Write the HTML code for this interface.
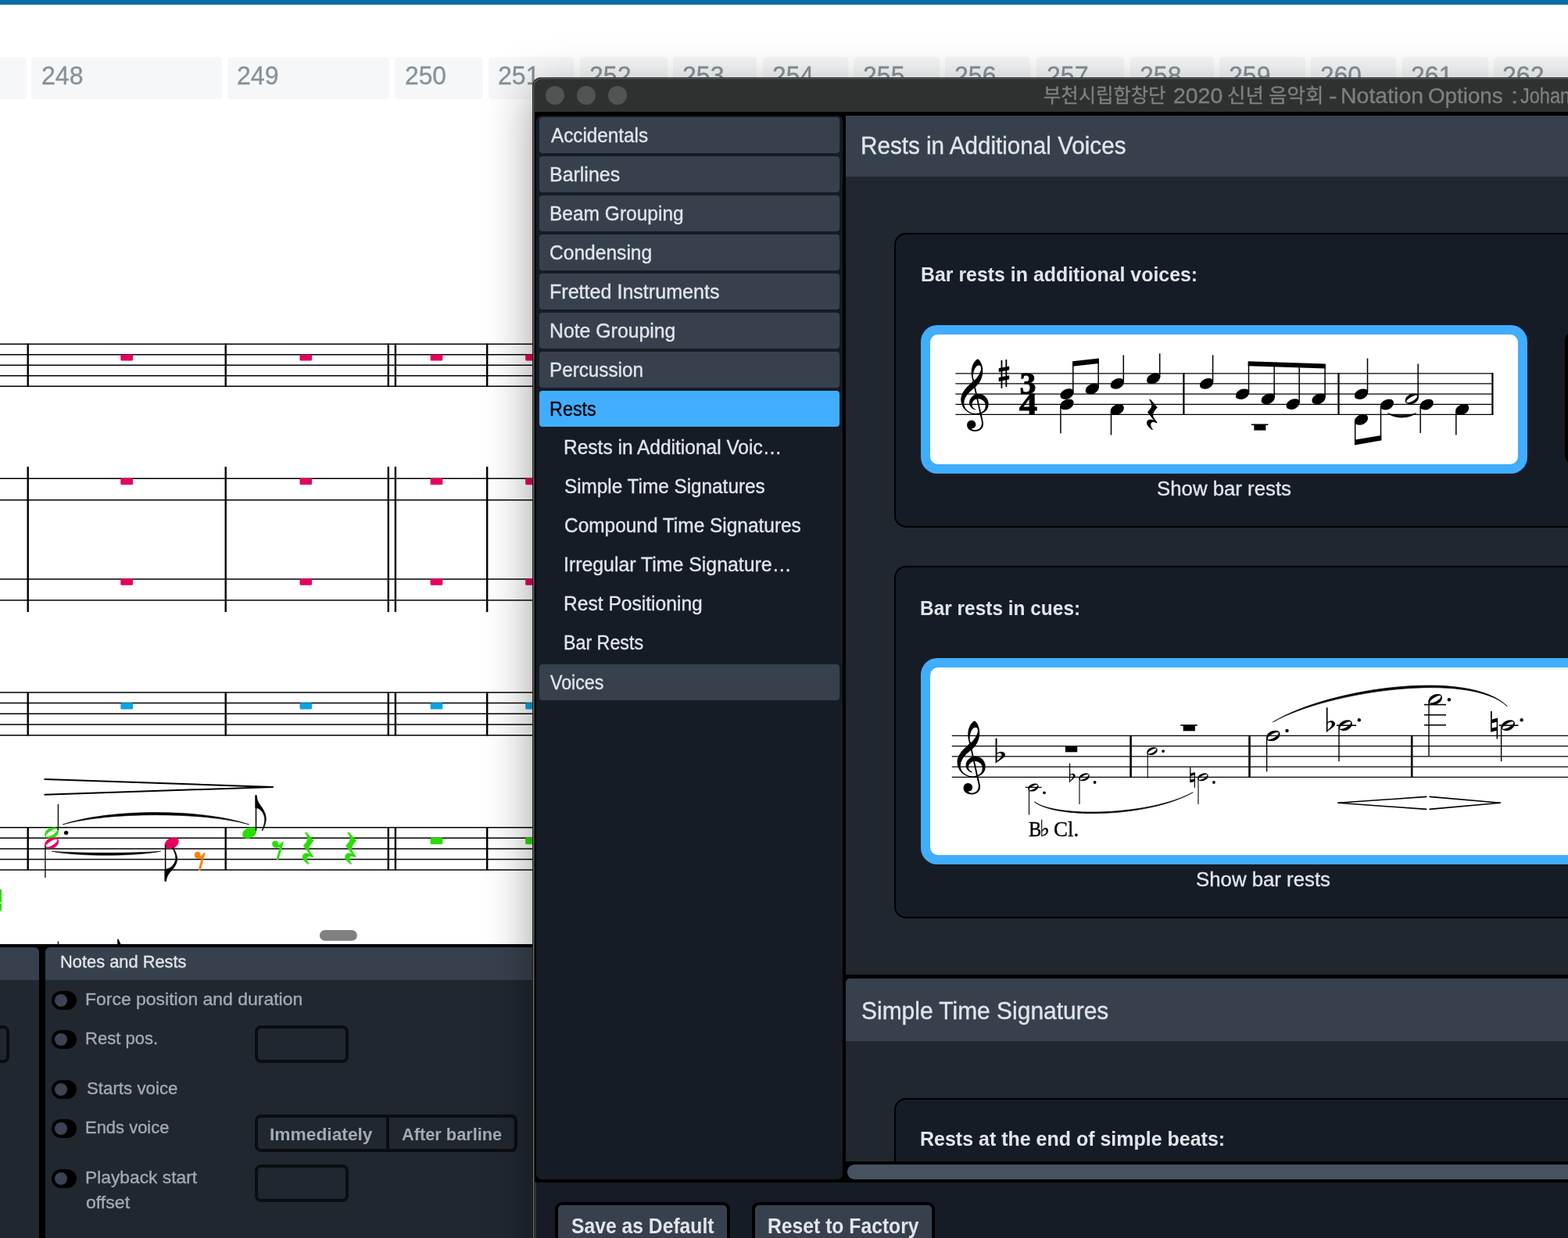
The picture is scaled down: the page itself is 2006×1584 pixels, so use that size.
<!DOCTYPE html>
<html lang="ko"><head><meta charset="utf-8"><title>Notation Options</title>
<style>
html,body{margin:0;padding:0}
body{width:2006px;height:1584px;overflow:hidden;position:relative;background:#fff;font-family:'Liberation Sans','Noto Sans CJK KR',sans-serif}
#root{position:absolute;left:0;top:0;width:2006px;height:1584px;overflow:hidden;will-change:transform}
.a{position:absolute;box-sizing:border-box}
.t{position:absolute;white-space:nowrap;line-height:1;transform-origin:0 0;display:block;-webkit-text-stroke:0.35px currentColor}
.item{position:absolute;left:690px;width:384px;height:46px;border-radius:4px;background:#37414e}
.tog{position:absolute;width:32px;height:24px;border-radius:12px;background:#000}
.tog i{position:absolute;left:4px;top:4px;width:16px;height:16px;border-radius:8px;background:#3a4453}
.inp{position:absolute;box-sizing:border-box;border:4px solid #0b0d10;border-radius:8px;background:#20272f}
.grp{position:absolute;box-sizing:border-box;border:2px solid #000;border-radius:15px;background:#161c25}
.btn{position:absolute;box-sizing:border-box;border:4px solid #000;border-radius:9px;background:#37414e}
</style></head>
<body>
<div id="root">
<div class="a" style="left:0px;top:0px;width:2006.00px;height:6.00px;background:#066da7;"></div>
<div class="a" style="left:-80px;top:73.3px;width:114.00px;height:53.70px;background:#f5f7f9;border-radius:4.5px;"></div>
<div class="a" style="left:40.4px;top:73.3px;width:243.40px;height:53.70px;background:#f5f7f9;border-radius:4.5px;"></div>
<span class="t " style="left:53.09px;top:79.78px;font-size:33.14px;color:#87939a;transform:scaleX(0.9696);">248</span>
<div class="a" style="left:290.6px;top:73.3px;width:207.50px;height:53.70px;background:#f5f7f9;border-radius:4.5px;"></div>
<span class="t " style="left:303.29px;top:79.78px;font-size:33.14px;color:#87939a;transform:scaleX(0.9696);">249</span>
<div class="a" style="left:504.9px;top:73.3px;width:113.20px;height:53.70px;background:#f5f7f9;border-radius:4.5px;"></div>
<span class="t " style="left:517.51px;top:79.78px;font-size:33.14px;color:#87939a;transform:scaleX(0.9601);">250</span>
<div class="a" style="left:624.9px;top:73.3px;width:109.60px;height:53.70px;background:#f5f7f9;border-radius:4.5px;"></div>
<span class="t " style="left:637.49px;top:79.78px;font-size:33.14px;color:#87939a;transform:scaleX(0.9696);">251</span>
<div class="a" style="left:742px;top:73.3px;width:112.00px;height:53.70px;background:#f5f7f9;border-radius:4.5px;"></div>
<span class="t " style="left:754.49px;top:79.78px;font-size:33.14px;color:#87939a;transform:scaleX(0.9696);">252</span>
<div class="a" style="left:861px;top:73.3px;width:107.00px;height:53.70px;background:#f5f7f9;border-radius:4.5px;"></div>
<span class="t " style="left:873.49px;top:79.78px;font-size:33.14px;color:#87939a;transform:scaleX(0.9696);">253</span>
<div class="a" style="left:975.7px;top:73.3px;width:109.20px;height:53.70px;background:#f5f7f9;border-radius:4.5px;"></div>
<span class="t " style="left:988.01px;top:79.78px;font-size:33.14px;color:#87939a;transform:scaleX(0.9601);">254</span>
<div class="a" style="left:1092px;top:73.3px;width:109.60px;height:53.70px;background:#f5f7f9;border-radius:4.5px;"></div>
<span class="t " style="left:1104.49px;top:79.78px;font-size:33.14px;color:#87939a;transform:scaleX(0.9696);">255</span>
<div class="a" style="left:1209px;top:73.3px;width:109.30px;height:53.70px;background:#f5f7f9;border-radius:4.5px;"></div>
<span class="t " style="left:1221.49px;top:79.78px;font-size:33.14px;color:#87939a;transform:scaleX(0.9696);">256</span>
<div class="a" style="left:1326.4px;top:73.3px;width:111.90px;height:53.70px;background:#f5f7f9;border-radius:4.5px;"></div>
<span class="t " style="left:1338.99px;top:79.78px;font-size:33.14px;color:#87939a;transform:scaleX(0.9696);">257</span>
<div class="a" style="left:1446px;top:73.3px;width:106.70px;height:53.70px;background:#f5f7f9;border-radius:4.5px;"></div>
<span class="t " style="left:1457.59px;top:79.78px;font-size:33.14px;color:#87939a;transform:scaleX(0.9696);">258</span>
<div class="a" style="left:1559.8px;top:73.3px;width:109.80px;height:53.70px;background:#f5f7f9;border-radius:4.5px;"></div>
<span class="t " style="left:1572.29px;top:79.78px;font-size:33.14px;color:#87939a;transform:scaleX(0.9696);">259</span>
<div class="a" style="left:1676.6px;top:73.3px;width:109.80px;height:53.70px;background:#f5f7f9;border-radius:4.5px;"></div>
<span class="t " style="left:1689.21px;top:79.78px;font-size:33.14px;color:#87939a;transform:scaleX(0.9601);">260</span>
<div class="a" style="left:1793.5px;top:73.3px;width:110.20px;height:53.70px;background:#f5f7f9;border-radius:4.5px;"></div>
<span class="t " style="left:1805.39px;top:79.78px;font-size:33.14px;color:#87939a;transform:scaleX(0.9696);">261</span>
<div class="a" style="left:1910.7px;top:73.3px;width:119.30px;height:53.70px;background:#f5f7f9;border-radius:4.5px;"></div>
<span class="t " style="left:1922.19px;top:79.78px;font-size:33.14px;color:#87939a;transform:scaleX(0.9696);">262</span>
<svg class="a" style="left:0;top:0" width="700" height="1208" viewBox="0 0 700 1208"><line x1="0.00" y1="440.20" x2="700.00" y2="440.20" stroke="#000" stroke-width="1.5" stroke-linecap="butt"/><line x1="0.00" y1="453.73" x2="700.00" y2="453.73" stroke="#000" stroke-width="1.5" stroke-linecap="butt"/><line x1="0.00" y1="467.25" x2="700.00" y2="467.25" stroke="#000" stroke-width="1.5" stroke-linecap="butt"/><line x1="0.00" y1="480.77" x2="700.00" y2="480.77" stroke="#000" stroke-width="1.5" stroke-linecap="butt"/><line x1="0.00" y1="494.30" x2="700.00" y2="494.30" stroke="#000" stroke-width="1.5" stroke-linecap="butt"/><line x1="35.70" y1="439.60" x2="35.70" y2="494.90" stroke="#000" stroke-width="2.4" stroke-linecap="butt"/><line x1="288.70" y1="439.60" x2="288.70" y2="494.90" stroke="#000" stroke-width="2.4" stroke-linecap="butt"/><line x1="496.80" y1="439.60" x2="496.80" y2="494.90" stroke="#000" stroke-width="2.4" stroke-linecap="butt"/><line x1="505.90" y1="439.60" x2="505.90" y2="494.90" stroke="#000" stroke-width="2.4" stroke-linecap="butt"/><line x1="623.20" y1="439.60" x2="623.20" y2="494.90" stroke="#000" stroke-width="2.4" stroke-linecap="butt"/><rect x="154.30" y="453.43" width="15.70" height="8.10" rx="1.5" fill="#e6005f"/><rect x="383.50" y="453.43" width="15.50" height="8.10" rx="1.5" fill="#e6005f"/><rect x="550.60" y="453.43" width="15.70" height="8.10" rx="1.5" fill="#e6005f"/><rect x="672.20" y="453.43" width="15.80" height="8.10" rx="1.5" fill="#e6005f"/><line x1="0.00" y1="612.20" x2="700.00" y2="612.20" stroke="#000" stroke-width="1.5" stroke-linecap="butt"/><line x1="0.00" y1="639.70" x2="700.00" y2="639.70" stroke="#000" stroke-width="1.5" stroke-linecap="butt"/><line x1="0.00" y1="741.00" x2="700.00" y2="741.00" stroke="#000" stroke-width="1.5" stroke-linecap="butt"/><line x1="0.00" y1="768.10" x2="700.00" y2="768.10" stroke="#000" stroke-width="1.5" stroke-linecap="butt"/><line x1="35.70" y1="597.20" x2="35.70" y2="783.10" stroke="#000" stroke-width="2.4" stroke-linecap="butt"/><line x1="288.70" y1="597.20" x2="288.70" y2="783.10" stroke="#000" stroke-width="2.4" stroke-linecap="butt"/><line x1="496.80" y1="597.20" x2="496.80" y2="783.10" stroke="#000" stroke-width="2.4" stroke-linecap="butt"/><line x1="505.90" y1="597.20" x2="505.90" y2="783.10" stroke="#000" stroke-width="2.4" stroke-linecap="butt"/><line x1="623.20" y1="597.20" x2="623.20" y2="783.10" stroke="#000" stroke-width="2.4" stroke-linecap="butt"/><rect x="154.30" y="611.90" width="15.70" height="8.40" rx="1.5" fill="#e6005f"/><rect x="154.30" y="740.30" width="15.70" height="8.40" rx="1.5" fill="#e6005f"/><rect x="383.50" y="611.90" width="15.50" height="8.40" rx="1.5" fill="#e6005f"/><rect x="383.50" y="740.30" width="15.50" height="8.40" rx="1.5" fill="#e6005f"/><rect x="550.60" y="611.90" width="15.70" height="8.40" rx="1.5" fill="#e6005f"/><rect x="550.60" y="740.30" width="15.70" height="8.40" rx="1.5" fill="#e6005f"/><rect x="672.20" y="611.90" width="15.80" height="8.40" rx="1.5" fill="#e6005f"/><rect x="672.20" y="740.30" width="15.80" height="8.40" rx="1.5" fill="#e6005f"/><line x1="0.00" y1="885.90" x2="700.00" y2="885.90" stroke="#000" stroke-width="1.5" stroke-linecap="butt"/><line x1="0.00" y1="899.62" x2="700.00" y2="899.62" stroke="#000" stroke-width="1.5" stroke-linecap="butt"/><line x1="0.00" y1="913.35" x2="700.00" y2="913.35" stroke="#000" stroke-width="1.5" stroke-linecap="butt"/><line x1="0.00" y1="927.07" x2="700.00" y2="927.07" stroke="#000" stroke-width="1.5" stroke-linecap="butt"/><line x1="0.00" y1="940.80" x2="700.00" y2="940.80" stroke="#000" stroke-width="1.5" stroke-linecap="butt"/><line x1="35.70" y1="885.30" x2="35.70" y2="941.40" stroke="#000" stroke-width="2.4" stroke-linecap="butt"/><line x1="288.70" y1="885.30" x2="288.70" y2="941.40" stroke="#000" stroke-width="2.4" stroke-linecap="butt"/><line x1="496.80" y1="885.30" x2="496.80" y2="941.40" stroke="#000" stroke-width="2.4" stroke-linecap="butt"/><line x1="505.90" y1="885.30" x2="505.90" y2="941.40" stroke="#000" stroke-width="2.4" stroke-linecap="butt"/><line x1="623.20" y1="885.30" x2="623.20" y2="941.40" stroke="#000" stroke-width="2.4" stroke-linecap="butt"/><rect x="154.30" y="899.33" width="15.70" height="8.10" rx="1.5" fill="#0aa4e2"/><rect x="383.50" y="899.33" width="15.50" height="8.10" rx="1.5" fill="#0aa4e2"/><rect x="550.60" y="899.33" width="15.70" height="8.10" rx="1.5" fill="#0aa4e2"/><rect x="672.20" y="899.33" width="15.80" height="8.10" rx="1.5" fill="#0aa4e2"/><line x1="0.00" y1="1058.80" x2="700.00" y2="1058.80" stroke="#000" stroke-width="1.5" stroke-linecap="butt"/><line x1="0.00" y1="1072.35" x2="700.00" y2="1072.35" stroke="#000" stroke-width="1.5" stroke-linecap="butt"/><line x1="0.00" y1="1085.90" x2="700.00" y2="1085.90" stroke="#000" stroke-width="1.5" stroke-linecap="butt"/><line x1="0.00" y1="1099.45" x2="700.00" y2="1099.45" stroke="#000" stroke-width="1.5" stroke-linecap="butt"/><line x1="0.00" y1="1113.00" x2="700.00" y2="1113.00" stroke="#000" stroke-width="1.5" stroke-linecap="butt"/><line x1="35.70" y1="1058.20" x2="35.70" y2="1113.60" stroke="#000" stroke-width="2.4" stroke-linecap="butt"/><line x1="288.70" y1="1058.20" x2="288.70" y2="1113.60" stroke="#000" stroke-width="2.4" stroke-linecap="butt"/><line x1="496.80" y1="1058.20" x2="496.80" y2="1113.60" stroke="#000" stroke-width="2.4" stroke-linecap="butt"/><line x1="505.90" y1="1058.20" x2="505.90" y2="1113.60" stroke="#000" stroke-width="2.4" stroke-linecap="butt"/><line x1="623.20" y1="1058.20" x2="623.20" y2="1113.60" stroke="#000" stroke-width="2.4" stroke-linecap="butt"/><rect x="550.60" y="1072.05" width="15.70" height="8.20" rx="1.5" fill="#27de00"/><rect x="672.20" y="1072.05" width="15.80" height="8.20" rx="1.5" fill="#27de00"/><line x1="57.40" y1="997.10" x2="348.80" y2="1007.00" stroke="#000" stroke-width="2.0" stroke-linecap="round"/><line x1="57.40" y1="1016.70" x2="348.80" y2="1007.00" stroke="#000" stroke-width="2.0" stroke-linecap="round"/><path d="M80.1 1055.0 C139.8 1034.4 259.1 1034.4 318.8 1055.0 C259.1 1038.6 139.8 1038.6 80.1 1055.0Z" fill="#000" stroke="#000" stroke-width="0.6" stroke-linejoin="round"/><path d="M66.1 1089.2 C101.0 1095.9 170.8 1095.9 205.7 1089.2 C170.8 1091.9 101.0 1091.9 66.1 1089.2Z" fill="#000" stroke="#000" stroke-width="0.6" stroke-linejoin="round"/><path d="M159 -1Q111 -1 80 22Q50 44 50 90Q50 141 78 182Q107 222 153 246Q199 269 251 269Q295 269 321 246Q347 222 347 179Q347 130 321 89Q295 48 252 24Q210 -1 159 -1ZM77 66Q77 56 84 48Q92 40 105 40Q140 40 192 69Q227 89 256 114Q284 138 301 162Q318 187 318 204Q318 215 312 222Q307 230 293 230Q274 230 247 218Q220 206 190 187Q161 168 135 146Q109 123 93 102Q77 81 77 66Z" fill="#27de00" transform="translate(54.07,1072.75) scale(0.06061,-0.05333)"/><path d="M159 -1Q111 -1 80 22Q50 44 50 90Q50 141 78 182Q107 222 153 246Q199 269 251 269Q295 269 321 246Q347 222 347 179Q347 130 321 89Q295 48 252 24Q210 -1 159 -1ZM77 66Q77 56 84 48Q92 40 105 40Q140 40 192 69Q227 89 256 114Q284 138 301 162Q318 187 318 204Q318 215 312 222Q307 230 293 230Q274 230 247 218Q220 206 190 187Q161 168 135 146Q109 123 93 102Q77 81 77 66Z" fill="#e6005f" transform="translate(54.07,1085.95) scale(0.06061,-0.05333)"/><line x1="74.40" y1="1028.90" x2="74.40" y2="1062.00" stroke="#000" stroke-width="1.3" stroke-linecap="butt"/><line x1="57.90" y1="1082.00" x2="57.90" y2="1123.00" stroke="#000" stroke-width="1.3" stroke-linecap="butt"/><circle cx="84.6" cy="1065.6" r="2.7" fill="#000"/><path d="M159 -1Q111 -1 80 22Q50 44 50 90Q50 141 78 182Q107 222 153 246Q199 269 251 269Q295 269 321 246Q347 222 347 179Q347 130 321 89Q295 48 252 24Q210 -1 159 -1Z" fill="#e6005f" transform="translate(207.67,1085.95) scale(0.06061,-0.05333)"/><line x1="211.60" y1="1081.00" x2="211.60" y2="1126.00" stroke="#000" stroke-width="1.5" stroke-linecap="butt"/><path d="M0 1009H26Q33 968 42 936Q50 905 66 876Q83 846 112 812L152 765Q178 736 202 704Q274 611 274 511Q274 407 186 259H170Q199 318 221 378Q243 437 243 491Q243 518 235 546Q227 575 212 605Q181 666 125 704Q69 743 0 743Z" fill="#000" stroke="#000" stroke-width="14" transform="translate(210.90,1069.75) scale(0.05733,0.05733)"/><path d="M155 269 251 609Q230 590 204 582Q177 574 151 574Q108 574 79 597Q50 620 50 663Q50 691 70 710Q90 730 121 730Q150 730 168 712Q187 693 187 662Q187 640 177 623Q177 617 189 617Q244 617 294 703H312L191 269Z" fill="#ff8000" stroke="#ff8000" stroke-width="24" stroke-linejoin="round" transform="translate(246.90,1126.72) scale(0.04809,-0.04989)"/><path d="M159 -1Q111 -1 80 22Q50 44 50 90Q50 141 78 182Q107 222 153 246Q199 269 251 269Q295 269 321 246Q347 222 347 179Q347 130 321 89Q295 48 252 24Q210 -1 159 -1Z" fill="#27de00" transform="translate(307.07,1072.75) scale(0.06061,-0.05333)"/><line x1="327.50" y1="1018.00" x2="327.50" y2="1063.00" stroke="#000" stroke-width="1.5" stroke-linecap="butt"/><path d="M0 1009H26Q33 968 42 936Q50 905 66 876Q83 846 112 812L152 765Q178 736 202 704Q274 611 274 511Q274 407 186 259H170Q199 318 221 378Q243 437 243 491Q243 518 235 546Q227 575 212 605Q181 666 125 704Q69 743 0 743Z" fill="#000" stroke="#000" stroke-width="14" transform="translate(326.80,1078.14) scale(0.04920,-0.06000)"/><path d="M155 269 251 609Q230 590 204 582Q177 574 151 574Q108 574 79 597Q50 620 50 663Q50 691 70 710Q90 730 121 730Q150 730 168 712Q187 693 187 662Q187 640 177 623Q177 617 189 617Q244 617 294 703H312L191 269Z" fill="#27de00" stroke="#27de00" stroke-width="24" stroke-linejoin="round" transform="translate(346.14,1112.72) scale(0.05115,-0.04989)"/><path d="M147 878 307 683Q257 624 230 581Q203 538 203 494Q203 457 227 416Q251 376 303 314L287 292Q243 320 205 320Q177 320 163 302Q149 283 149 257Q149 225 162 196Q176 168 199 142L186 123Q117 173 84 214Q51 255 51 303Q51 346 78 366Q105 386 143 386Q173 386 221 363V365L67 570Q168 659 168 736Q168 797 104 878Z" fill="#27de00" stroke="#27de00" stroke-width="10" stroke-linejoin="round" transform="translate(384.31,1112.63) scale(0.05469,-0.05391)"/><path d="M147 878 307 683Q257 624 230 581Q203 538 203 494Q203 457 227 416Q251 376 303 314L287 292Q243 320 205 320Q177 320 163 302Q149 283 149 257Q149 225 162 196Q176 168 199 142L186 123Q117 173 84 214Q51 255 51 303Q51 346 78 366Q105 386 143 386Q173 386 221 363V365L67 570Q168 659 168 736Q168 797 104 878Z" fill="#27de00" stroke="#27de00" stroke-width="10" stroke-linejoin="round" transform="translate(438.67,1112.63) scale(0.05547,-0.05391)"/><rect x="0.00" y="1137.90" width="2.00" height="16.80" rx="0" fill="#27de00"/><rect x="0.00" y="1156.00" width="2.00" height="9.20" rx="0" fill="#27de00"/><line x1="74.40" y1="1204.50" x2="74.40" y2="1208.00" stroke="#000" stroke-width="1.3" stroke-linecap="butt"/><path d="M150.2 1201.5 L151.5 1201.5 L154.5 1208 L150.2 1208Z" fill="#000"/><rect x="408.90" y="1190.00" width="48.00" height="13.80" rx="6.9" fill="#808080"/></svg>
<div class="a" style="left:0px;top:1208px;width:700.00px;height:376.00px;background:#000;"></div>
<div class="a" style="left:0px;top:1212px;width:49.90px;height:42.00px;background:#37414e;border-radius:0 6px 0 0;"></div>
<div class="a" style="left:0px;top:1254px;width:49.90px;height:330.00px;background:#20272f;"></div>
<div class="a" style="left:57.8px;top:1212px;width:642.20px;height:42.00px;background:#37414e;border-radius:6px 0 0 0;"></div>
<div class="a" style="left:57.8px;top:1254px;width:642.20px;height:330.00px;background:#20272f;"></div>
<span class="t " style="left:77.49px;top:1218.67px;font-size:22.97px;color:#e2e5ea;transform:scaleX(0.9512);">Notes and Rests</span>
<div class="inp" style="left:-30px;top:1312px;width:42px;height:48px"></div>
<div class="tog" style="left:65.9px;top:1268.0px"><i></i></div>
<span class="t " style="left:109.41px;top:1267.47px;font-size:22.97px;color:#a4aab2;transform:scaleX(0.9996);">Force position and duration</span>
<div class="tog" style="left:65.9px;top:1318.0px"><i></i></div>
<span class="t " style="left:109.48px;top:1317.47px;font-size:22.97px;color:#a4aab2;transform:scaleX(0.9599);">Rest pos.</span>
<div class="tog" style="left:65.9px;top:1381.9px"><i></i></div>
<span class="t " style="left:110.50px;top:1381.37px;font-size:22.97px;color:#a4aab2;transform:scaleX(0.9702);">Starts voice</span>
<div class="tog" style="left:65.9px;top:1432.0px"><i></i></div>
<span class="t " style="left:109.48px;top:1431.47px;font-size:22.97px;color:#a4aab2;transform:scaleX(0.9561);">Ends voice</span>
<div class="tog" style="left:65.9px;top:1495.8px"><i></i></div>
<span class="t " style="left:109.42px;top:1495.27px;font-size:22.97px;color:#a4aab2;transform:scaleX(0.9922);">Playback start</span>
<span class="t " style="left:109.88px;top:1527.47px;font-size:22.97px;color:#a4aab2;transform:scaleX(1.0052);">offset</span>
<div class="inp" style="left:326.2px;top:1312px;width:119.8px;height:48px"></div>
<div class="inp" style="left:326.2px;top:1490px;width:119.8px;height:48px"></div>
<div class="inp" style="left:326.2px;top:1426.2px;width:335.8px;height:47.6px"></div>
<div class="a" style="left:493.5px;top:1428px;width:4.00px;height:44.00px;background:#0b0d10;"></div>
<span class="t " style="left:345.38px;top:1439.57px;font-size:22.97px;color:#a4aab2;transform:scaleX(0.9905);font-weight:700;-webkit-text-stroke:0;">Immediately</span>
<span class="t " style="left:513.66px;top:1439.57px;font-size:22.97px;color:#a4aab2;transform:scaleX(0.9476);font-weight:700;-webkit-text-stroke:0;">After barline</span>
<div class="a" style="left:681px;top:99px;width:1500px;height:1700px;background:#2f3130;border-radius:11px 0 0 0;box-shadow:0 16px 60px 2px rgba(0,0,0,.36), inset 1px 1px 0 #676968;border-top:1px solid #1d1d1d;border-left:1px solid #1d1d1d"></div>
<div class="a" style="left:697.7px;top:109.5px;width:24.4px;height:24.4px;border-radius:50%;background:#525453"></div>
<div class="a" style="left:737.8px;top:109.5px;width:24.4px;height:24.4px;border-radius:50%;background:#525453"></div>
<div class="a" style="left:777.6px;top:109.5px;width:24.4px;height:24.4px;border-radius:50%;background:#525453"></div>
<span class="t " style="left:1335.26px;top:111.45px;font-size:24.60px;color:#7e7f7e;transform:scaleX(0.9876);">부천시립합창단</span>
<span class="t " style="left:1500.97px;top:108.87px;font-size:27.76px;color:#7e7f7e;transform:scaleX(1.0240);">2020</span>
<span class="t " style="left:1570.20px;top:111.45px;font-size:24.60px;color:#7e7f7e;transform:scaleX(1.0370);">신년</span>
<span class="t " style="left:1623.21px;top:111.45px;font-size:24.60px;color:#7e7f7e;transform:scaleX(1.0359);">음악회</span>
<span class="t " style="left:1699.61px;top:108.87px;font-size:27.76px;color:#7e7f7e;transform:scaleX(1.1391);">-</span>
<span class="t " style="left:1715.47px;top:108.87px;font-size:27.76px;color:#7e7f7e;transform:scaleX(1.0264);">Notation</span>
<span class="t " style="left:1827.20px;top:108.87px;font-size:27.76px;color:#7e7f7e;transform:scaleX(0.9999);">Options</span>
<span class="t " style="left:1933.03px;top:108.87px;font-size:27.76px;color:#7e7f7e;transform:scaleX(1.1856);">:</span>
<span class="t " style="left:1945.43px;top:108.87px;font-size:27.76px;color:#7e7f7e;transform:scaleX(0.8480);">Johannes</span>
<div class="a" style="left:684px;top:142.6px;width:1416.00px;height:1370.70px;background:#000;"></div>
<div class="a" style="left:686px;top:148px;width:392.00px;height:1361.40px;background:#161c25;border-radius:7px;"></div>
<div class="item" style="top:149.6px;"></div>
<span class="t " style="left:704.60px;top:160.86px;font-size:25.58px;color:#e2e5ea;transform:scaleX(0.9491);">Accidentals</span>
<div class="item" style="top:199.6px;"></div>
<span class="t " style="left:702.65px;top:210.86px;font-size:25.58px;color:#e2e5ea;transform:scaleX(0.9752);">Barlines</span>
<div class="item" style="top:249.6px;"></div>
<span class="t " style="left:702.68px;top:260.86px;font-size:25.58px;color:#e2e5ea;transform:scaleX(0.9583);">Beam Grouping</span>
<div class="item" style="top:299.6px;"></div>
<span class="t " style="left:703.45px;top:310.86px;font-size:25.58px;color:#e2e5ea;transform:scaleX(0.9611);">Condensing</span>
<div class="item" style="top:349.6px;"></div>
<span class="t " style="left:702.64px;top:360.86px;font-size:25.58px;color:#e2e5ea;transform:scaleX(0.9804);">Fretted Instruments</span>
<div class="item" style="top:399.6px;"></div>
<span class="t " style="left:702.66px;top:410.86px;font-size:25.58px;color:#e2e5ea;transform:scaleX(0.9703);">Note Grouping</span>
<div class="item" style="top:449.6px;"></div>
<span class="t " style="left:702.71px;top:460.86px;font-size:25.58px;color:#e2e5ea;transform:scaleX(0.9479);">Percussion</span>
<div class="item" style="top:499.6px;background:#41adff"></div>
<span class="t " style="left:702.77px;top:510.86px;font-size:25.58px;color:#000;transform:scaleX(0.9139);">Rests</span>
<span class="t " style="left:721.09px;top:559.86px;font-size:25.58px;color:#e2e5ea;transform:scaleX(0.9579);">Rests in Additional Voic…</span>
<span class="t " style="left:722.24px;top:609.86px;font-size:25.58px;color:#e2e5ea;transform:scaleX(0.9502);">Simple Time Signatures</span>
<span class="t " style="left:721.85px;top:659.86px;font-size:25.58px;color:#e2e5ea;transform:scaleX(0.9551);">Compound Time Signatures</span>
<span class="t " style="left:721.06px;top:709.86px;font-size:25.58px;color:#e2e5ea;transform:scaleX(0.9720);">Irregular Time Signature…</span>
<span class="t " style="left:721.08px;top:759.86px;font-size:25.58px;color:#e2e5ea;transform:scaleX(0.9619);">Rest Positioning</span>
<span class="t " style="left:721.18px;top:809.86px;font-size:25.58px;color:#e2e5ea;transform:scaleX(0.9086);">Bar Rests</span>
<div class="item" style="top:850px"></div>
<span class="t " style="left:704.20px;top:860.86px;font-size:25.58px;color:#e2e5ea;transform:scaleX(0.9052);">Voices</span>
<div class="a" style="left:1082px;top:148px;width:1018.00px;height:78.00px;background:#37414e;"></div>
<div class="a" style="left:1082px;top:226px;width:1018.00px;height:1021.00px;background:#20272f;"></div>
<div class="a" style="left:1082px;top:1252px;width:1018.00px;height:80.00px;background:#37414e;border-radius:5px 0 0 0;"></div>
<div class="a" style="left:1082px;top:1332px;width:1018.00px;height:154.40px;background:#20272f;"></div>
<span class="t " style="left:1101.28px;top:170.12px;font-size:32.27px;color:#e2e5ea;transform:scaleX(0.9188);">Rests in Additional Voices</span>
<span class="t " style="left:1101.96px;top:1276.62px;font-size:32.27px;color:#e2e5ea;transform:scaleX(0.9283);">Simple Time Signatures</span>
<div class="grp" style="left:1144px;top:298px;width:1000px;height:377px"></div>
<div class="grp" style="left:1144px;top:724px;width:1000px;height:451px"></div>
<div class="grp" style="left:1144px;top:1405px;width:1000px;height:82px;border-bottom:none;border-radius:15px 0 0 0"></div>
<div class="a" style="left:1082px;top:1486.4px;width:1018.00px;height:23.00px;background:#000;"></div>
<div class="a" style="left:1084px;top:1490px;width:1016.00px;height:19.40px;background:#46525f;border-radius:9px;"></div>
<span class="t " style="left:1177.64px;top:338.32px;font-size:26.45px;color:#e2e5ea;transform:scaleX(0.9415);font-weight:700;-webkit-text-stroke:0;">Bar rests in additional voices:</span>
<span class="t " style="left:1177.27px;top:764.52px;font-size:26.45px;color:#e2e5ea;transform:scaleX(0.9245);font-weight:700;-webkit-text-stroke:0;">Bar rests in cues:</span>
<span class="t " style="left:1177.44px;top:1443.92px;font-size:26.45px;color:#e2e5ea;transform:scaleX(0.9450);font-weight:700;-webkit-text-stroke:0;">Rests at the end of simple beats:</span>
<span class="t " style="left:1480.39px;top:612.27px;font-size:26.16px;color:#e2e5ea;transform:scaleX(0.9858);">Show bar rests</span>
<span class="t " style="left:1530.09px;top:1112.07px;font-size:26.16px;color:#e2e5ea;transform:scaleX(0.9858);">Show bar rests</span>
<div class="a" style="left:1178px;top:416px;width:776.00px;height:190.00px;background:#41adff;border-radius:21px;"></div>
<div class="a" style="left:1190px;top:428px;width:752.00px;height:166.00px;background:#fff;border-radius:10px;"></div>
<div class="a" style="left:1178px;top:842px;width:922.00px;height:264.00px;background:#41adff;border-radius:21px;"></div>
<div class="a" style="left:1190px;top:854px;width:910.00px;height:240.00px;background:#fff;border-radius:10px;"></div>
<div class="a" style="left:2002px;top:424px;width:98.00px;height:170.00px;background:#000;border-radius:12px;"></div>
<div class="a" style="left:685.5px;top:1513.3px;width:1414.50px;height:86.70px;background:#161c25;"></div>
<div class="btn" style="left:710px;top:1538px;width:224px;height:80px"></div>
<div class="btn" style="left:962px;top:1538px;width:233.5px;height:80px"></div>
<span class="t " style="left:730.81px;top:1556.03px;font-size:27.03px;color:#e2e5ea;transform:scaleX(0.9137);font-weight:700;-webkit-text-stroke:0;">Save as Default</span>
<span class="t " style="left:981.86px;top:1556.03px;font-size:27.03px;color:#e2e5ea;transform:scaleX(0.9144);font-weight:700;-webkit-text-stroke:0;">Reset to Factory</span>
<svg class="a" style="left:1178px;top:416px" width="828" height="690" viewBox="1178 416 828 690"><line x1="1222.40" y1="477.80" x2="1910.20" y2="477.80" stroke="#000" stroke-width="1.25" stroke-linecap="butt"/><line x1="1222.40" y1="490.95" x2="1910.20" y2="490.95" stroke="#000" stroke-width="1.25" stroke-linecap="butt"/><line x1="1222.40" y1="504.10" x2="1910.20" y2="504.10" stroke="#000" stroke-width="1.25" stroke-linecap="butt"/><line x1="1222.40" y1="517.25" x2="1910.20" y2="517.25" stroke="#000" stroke-width="1.25" stroke-linecap="butt"/><line x1="1222.40" y1="530.40" x2="1910.20" y2="530.40" stroke="#000" stroke-width="1.25" stroke-linecap="butt"/><path d="M314 801Q300 854 291 906Q282 958 282 1012Q282 1059 288 1100Q295 1142 307 1177Q320 1217 341 1252Q362 1288 386 1311Q409 1334 427 1334Q451 1334 493 1249Q514 1206 524 1156Q534 1106 534 1049Q534 978 515 908Q496 837 460 775Q423 713 372 666L407 498Q422 500 432 501Q442 502 447 502Q508 502 556 468Q604 433 632 377Q661 321 661 254Q661 177 622 116Q582 54 503 25Q508 8 532 -117Q538 -147 541 -164Q544 -182 545 -195Q546 -208 546 -225Q546 -275 522 -314Q497 -354 456 -376Q414 -398 363 -398Q311 -398 271 -378Q231 -359 208 -324Q185 -290 185 -245Q185 -197 212 -165Q238 -133 287 -133Q329 -133 356 -164Q382 -194 382 -236Q382 -272 357 -299Q332 -326 292 -326H282Q308 -365 364 -365Q433 -365 472 -320Q511 -275 511 -205Q511 -188 507 -160Q503 -131 493 -91Q483 -51 478 -25Q472 1 470 12Q436 2 390 2Q304 2 222 52Q142 102 96 184Q50 266 50 361Q50 451 91 530Q132 609 192 675Q253 741 314 801ZM341 826Q364 838 390 870Q416 903 440 945Q464 987 479 1030Q494 1072 494 1106Q494 1142 483 1163Q472 1184 445 1184Q421 1184 398 1162Q376 1140 358 1104Q341 1067 331 1022Q321 977 321 930Q321 898 328 872Q334 846 341 826ZM398 379Q371 373 347 354Q323 334 308 306Q294 279 294 248Q294 223 307 196Q320 170 339 154Q352 142 365 136Q380 129 380 123Q380 120 370 117Q332 126 302 151Q271 176 254 212Q236 247 236 287Q236 330 254 370Q271 410 302 442Q334 474 374 490L345 641Q229 547 174 456Q120 366 120 277Q120 212 154 156Q188 100 247 66Q306 31 380 31Q400 31 420 35Q441 39 464 45ZM495 55Q593 97 593 227Q593 270 571 306Q549 341 512 362Q475 383 429 383Z" fill="#000" transform="translate(1226.29,530.74) scale(0.05810,-0.05341)"/><path d="M97 46V189L50 177V277L97 290V486H128V298L195 314V509H226V322L275 333V234L226 220V77L275 89V-14L226 -26V-214H195V-34L128 -52V-247H97V-59L50 -71V32ZM195 70V214L128 197V54Z" fill="#000" transform="translate(1274.70,484.68) scale(0.06000,-0.04868)"/><text x="1315" y="503.6" font-family="'Liberation Serif','DejaVu Serif',serif" font-weight="700" font-size="39.5" stroke="#000" stroke-width="0.9" text-anchor="middle" textLength="21" lengthAdjust="spacingAndGlyphs">3</text><text x="1315.6" y="529.9" font-family="'Liberation Serif','DejaVu Serif',serif" font-weight="700" font-size="39.5" stroke="#000" stroke-width="0.9" text-anchor="middle" textLength="23" lengthAdjust="spacingAndGlyphs">4</text><path d="M159 -1Q111 -1 80 22Q50 44 50 90Q50 141 78 182Q107 222 153 246Q199 269 251 269Q295 269 321 246Q347 222 347 179Q347 130 321 89Q295 48 252 24Q210 -1 159 -1Z" fill="#000" transform="translate(1353.50,510.85) scale(0.05791,-0.05037)"/><path d="M159 -1Q111 -1 80 22Q50 44 50 90Q50 141 78 182Q107 222 153 246Q199 269 251 269Q295 269 321 246Q347 222 347 179Q347 130 321 89Q295 48 252 24Q210 -1 159 -1Z" fill="#000" transform="translate(1353.50,524.25) scale(0.05791,-0.05037)"/><line x1="1372.80" y1="463.00" x2="1372.80" y2="503.00" stroke="#000" stroke-width="1.5" stroke-linecap="butt"/><line x1="1356.90" y1="519.00" x2="1356.90" y2="554.60" stroke="#000" stroke-width="1.5" stroke-linecap="butt"/><path d="M159 -1Q111 -1 80 22Q50 44 50 90Q50 141 78 182Q107 222 153 246Q199 269 251 269Q295 269 321 246Q347 222 347 179Q347 130 321 89Q295 48 252 24Q210 -1 159 -1Z" fill="#000" transform="translate(1385.80,504.35) scale(0.05791,-0.05037)"/><line x1="1405.20" y1="459.50" x2="1405.20" y2="496.00" stroke="#000" stroke-width="1.5" stroke-linecap="butt"/><path d="M1372.05 462.2 L1405.95 458.4 L1405.95 464.9 L1372.05 468.7Z"/><path d="M159 -1Q111 -1 80 22Q50 44 50 90Q50 141 78 182Q107 222 153 246Q199 269 251 269Q295 269 321 246Q347 222 347 179Q347 130 321 89Q295 48 252 24Q210 -1 159 -1Z" fill="#000" transform="translate(1417.80,497.65) scale(0.05791,-0.05037)"/><line x1="1437.30" y1="454.30" x2="1437.30" y2="489.00" stroke="#000" stroke-width="1.5" stroke-linecap="butt"/><path d="M159 -1Q111 -1 80 22Q50 44 50 90Q50 141 78 182Q107 222 153 246Q199 269 251 269Q295 269 321 246Q347 222 347 179Q347 130 321 89Q295 48 252 24Q210 -1 159 -1Z" fill="#000" transform="translate(1417.80,530.75) scale(0.05791,-0.05037)"/><line x1="1421.50" y1="526.00" x2="1421.50" y2="556.60" stroke="#000" stroke-width="1.5" stroke-linecap="butt"/><path d="M159 -1Q111 -1 80 22Q50 44 50 90Q50 141 78 182Q107 222 153 246Q199 269 251 269Q295 269 321 246Q347 222 347 179Q347 130 321 89Q295 48 252 24Q210 -1 159 -1Z" fill="#000" transform="translate(1464.20,491.05) scale(0.05791,-0.05037)"/><line x1="1483.70" y1="452.30" x2="1483.70" y2="482.50" stroke="#000" stroke-width="1.5" stroke-linecap="butt"/><path d="M147 878 307 683Q257 624 230 581Q203 538 203 494Q203 457 227 416Q251 376 303 314L287 292Q243 320 205 320Q177 320 163 302Q149 283 149 257Q149 225 162 196Q176 168 199 142L186 123Q117 173 84 214Q51 255 51 303Q51 346 78 366Q105 386 143 386Q173 386 221 363V365L67 570Q168 659 168 736Q168 797 104 878Z" fill="#000" transform="translate(1464.27,556.54) scale(0.05352,-0.05152)"/><line x1="1514.40" y1="477.20" x2="1514.40" y2="531.00" stroke="#000" stroke-width="2.2" stroke-linecap="butt"/><path d="M159 -1Q111 -1 80 22Q50 44 50 90Q50 141 78 182Q107 222 153 246Q199 269 251 269Q295 269 321 246Q347 222 347 179Q347 130 321 89Q295 48 252 24Q210 -1 159 -1Z" fill="#000" transform="translate(1532.10,497.65) scale(0.05791,-0.05037)"/><line x1="1551.60" y1="454.30" x2="1551.60" y2="489.00" stroke="#000" stroke-width="1.5" stroke-linecap="butt"/><path d="M159 -1Q111 -1 80 22Q50 44 50 90Q50 141 78 182Q107 222 153 246Q199 269 251 269Q295 269 321 246Q347 222 347 179Q347 130 321 89Q295 48 252 24Q210 -1 159 -1Z" fill="#000" transform="translate(1578.00,510.95) scale(0.05791,-0.05037)"/><line x1="1597.50" y1="463.21" x2="1597.50" y2="502.70" stroke="#000" stroke-width="1.5" stroke-linecap="butt"/><path d="M159 -1Q111 -1 80 22Q50 44 50 90Q50 141 78 182Q107 222 153 246Q199 269 251 269Q295 269 321 246Q347 222 347 179Q347 130 321 89Q295 48 252 24Q210 -1 159 -1Z" fill="#000" transform="translate(1610.70,517.15) scale(0.05791,-0.05037)"/><line x1="1630.20" y1="464.27" x2="1630.20" y2="508.90" stroke="#000" stroke-width="1.5" stroke-linecap="butt"/><path d="M159 -1Q111 -1 80 22Q50 44 50 90Q50 141 78 182Q107 222 153 246Q199 269 251 269Q295 269 321 246Q347 222 347 179Q347 130 321 89Q295 48 252 24Q210 -1 159 -1Z" fill="#000" transform="translate(1642.60,523.85) scale(0.05791,-0.05037)"/><line x1="1662.20" y1="465.31" x2="1662.20" y2="515.60" stroke="#000" stroke-width="1.5" stroke-linecap="butt"/><path d="M159 -1Q111 -1 80 22Q50 44 50 90Q50 141 78 182Q107 222 153 246Q199 269 251 269Q295 269 321 246Q347 222 347 179Q347 130 321 89Q295 48 252 24Q210 -1 159 -1Z" fill="#000" transform="translate(1675.50,517.15) scale(0.05791,-0.05037)"/><line x1="1695.10" y1="466.38" x2="1695.10" y2="508.90" stroke="#000" stroke-width="1.5" stroke-linecap="butt"/><path d="M1596.75 462.2 L1695.85 465.4 L1695.85 471.4 L1596.75 468.2Z"/><line x1="1600.90" y1="543.30" x2="1622.40" y2="543.30" stroke="#000" stroke-width="1.6" stroke-linecap="butt"/><rect x="1604.30" y="543.30" width="15.10" height="7.30" rx="0" fill="#000"/><line x1="1712.50" y1="477.20" x2="1712.50" y2="531.00" stroke="#000" stroke-width="2.2" stroke-linecap="butt"/><path d="M159 -1Q111 -1 80 22Q50 44 50 90Q50 141 78 182Q107 222 153 246Q199 269 251 269Q295 269 321 246Q347 222 347 179Q347 130 321 89Q295 48 252 24Q210 -1 159 -1Z" fill="#000" transform="translate(1730.00,510.95) scale(0.05791,-0.05037)"/><line x1="1749.50" y1="458.50" x2="1749.50" y2="502.50" stroke="#000" stroke-width="1.5" stroke-linecap="butt"/><path d="M159 -1Q111 -1 80 22Q50 44 50 90Q50 141 78 182Q107 222 153 246Q199 269 251 269Q295 269 321 246Q347 222 347 179Q347 130 321 89Q295 48 252 24Q210 -1 159 -1Z" fill="#000" transform="translate(1730.00,543.75) scale(0.05791,-0.05037)"/><line x1="1733.70" y1="539.00" x2="1733.70" y2="569.00" stroke="#000" stroke-width="1.5" stroke-linecap="butt"/><path d="M159 -1Q111 -1 80 22Q50 44 50 90Q50 141 78 182Q107 222 153 246Q199 269 251 269Q295 269 321 246Q347 222 347 179Q347 130 321 89Q295 48 252 24Q210 -1 159 -1Z" fill="#000" transform="translate(1762.90,524.35) scale(0.05791,-0.05037)"/><line x1="1766.50" y1="519.50" x2="1766.50" y2="563.00" stroke="#000" stroke-width="1.5" stroke-linecap="butt"/><path d="M1732.95 562.7 L1767.25 557 L1767.25 563.6 L1732.95 569.6Z"/><path d="M159 -1Q111 -1 80 22Q50 44 50 90Q50 141 78 182Q107 222 153 246Q199 269 251 269Q295 269 321 246Q347 222 347 179Q347 130 321 89Q295 48 252 24Q210 -1 159 -1ZM77 66Q77 56 84 48Q92 40 105 40Q140 40 192 69Q227 89 256 114Q284 138 301 162Q318 187 318 204Q318 215 312 222Q307 230 293 230Q274 230 247 218Q220 206 190 187Q161 168 135 146Q109 123 93 102Q77 81 77 66Z" fill="#000" transform="translate(1794.80,517.15) scale(0.05791,-0.05037)"/><line x1="1814.20" y1="465.40" x2="1814.20" y2="508.50" stroke="#000" stroke-width="1.5" stroke-linecap="butt"/><path d="M1775.4 528.6 C1784.5 536.0 1802.5 536.0 1811.6 528.6 C1802.5 532.6 1784.5 532.6 1775.4 528.6Z" fill="#000" stroke="#000" stroke-width="0.6" stroke-linejoin="round"/><path d="M159 -1Q111 -1 80 22Q50 44 50 90Q50 141 78 182Q107 222 153 246Q199 269 251 269Q295 269 321 246Q347 222 347 179Q347 130 321 89Q295 48 252 24Q210 -1 159 -1Z" fill="#000" transform="translate(1813.70,524.35) scale(0.05791,-0.05037)"/><line x1="1817.20" y1="519.50" x2="1817.20" y2="554.00" stroke="#000" stroke-width="1.5" stroke-linecap="butt"/><path d="M159 -1Q111 -1 80 22Q50 44 50 90Q50 141 78 182Q107 222 153 246Q199 269 251 269Q295 269 321 246Q347 222 347 179Q347 130 321 89Q295 48 252 24Q210 -1 159 -1Z" fill="#000" transform="translate(1859.20,530.75) scale(0.05791,-0.05037)"/><line x1="1862.80" y1="526.00" x2="1862.80" y2="556.60" stroke="#000" stroke-width="1.5" stroke-linecap="butt"/><line x1="1909.40" y1="477.20" x2="1909.40" y2="531.00" stroke="#000" stroke-width="2.2" stroke-linecap="butt"/><line x1="1217.80" y1="941.40" x2="2010.00" y2="941.40" stroke="#000" stroke-width="1.25" stroke-linecap="butt"/><line x1="1217.80" y1="954.65" x2="2010.00" y2="954.65" stroke="#000" stroke-width="1.25" stroke-linecap="butt"/><line x1="1217.80" y1="967.90" x2="2010.00" y2="967.90" stroke="#000" stroke-width="1.25" stroke-linecap="butt"/><line x1="1217.80" y1="981.15" x2="2010.00" y2="981.15" stroke="#000" stroke-width="1.25" stroke-linecap="butt"/><line x1="1217.80" y1="994.40" x2="2010.00" y2="994.40" stroke="#000" stroke-width="1.25" stroke-linecap="butt"/><path d="M314 801Q300 854 291 906Q282 958 282 1012Q282 1059 288 1100Q295 1142 307 1177Q320 1217 341 1252Q362 1288 386 1311Q409 1334 427 1334Q451 1334 493 1249Q514 1206 524 1156Q534 1106 534 1049Q534 978 515 908Q496 837 460 775Q423 713 372 666L407 498Q422 500 432 501Q442 502 447 502Q508 502 556 468Q604 433 632 377Q661 321 661 254Q661 177 622 116Q582 54 503 25Q508 8 532 -117Q538 -147 541 -164Q544 -182 545 -195Q546 -208 546 -225Q546 -275 522 -314Q497 -354 456 -376Q414 -398 363 -398Q311 -398 271 -378Q231 -359 208 -324Q185 -290 185 -245Q185 -197 212 -165Q238 -133 287 -133Q329 -133 356 -164Q382 -194 382 -236Q382 -272 357 -299Q332 -326 292 -326H282Q308 -365 364 -365Q433 -365 472 -320Q511 -275 511 -205Q511 -188 507 -160Q503 -131 493 -91Q483 -51 478 -25Q472 1 470 12Q436 2 390 2Q304 2 222 52Q142 102 96 184Q50 266 50 361Q50 451 91 530Q132 609 192 675Q253 741 314 801ZM341 826Q364 838 390 870Q416 903 440 945Q464 987 479 1030Q494 1072 494 1106Q494 1142 483 1163Q472 1184 445 1184Q421 1184 398 1162Q376 1140 358 1104Q341 1067 331 1022Q321 977 321 930Q321 898 328 872Q334 846 341 826ZM398 379Q371 373 347 354Q323 334 308 306Q294 279 294 248Q294 223 307 196Q320 170 339 154Q352 142 365 136Q380 129 380 123Q380 120 370 117Q332 126 302 151Q271 176 254 212Q236 247 236 287Q236 330 254 370Q271 410 302 442Q334 474 374 490L345 641Q229 547 174 456Q120 366 120 277Q120 212 154 156Q188 100 247 66Q306 31 380 31Q400 31 420 35Q441 39 464 45ZM495 55Q593 97 593 227Q593 270 571 306Q549 341 512 362Q475 383 429 383Z" fill="#000" transform="translate(1221.53,994.90) scale(0.05941,-0.05427)"/><path d="M50 615H81V225Q118 262 165 262Q197 262 223 240Q249 219 249 178Q249 146 230 119Q211 92 179 65L110 6Q91 -10 76 -26Q61 -41 50 -55ZM81 12Q107 40 125 64Q143 87 153 105Q164 124 170 140Q175 156 175 170Q175 198 162 210Q149 223 134 223Q118 223 102 212Q87 200 81 180Z" fill="#000" transform="translate(1270.48,974.17) scale(0.06231,-0.04776)"/><rect x="1362.90" y="955.00" width="15.30" height="7.30" rx="0" fill="#000"/><line x1="1311.80" y1="1007.40" x2="1332.60" y2="1007.40" stroke="#000" stroke-width="1.3" stroke-linecap="butt"/><path d="M159 -1Q111 -1 80 22Q50 44 50 90Q50 141 78 182Q107 222 153 246Q199 269 251 269Q295 269 321 246Q347 222 347 179Q347 130 321 89Q295 48 252 24Q210 -1 159 -1ZM77 66Q77 56 84 48Q92 40 105 40Q140 40 192 69Q227 89 256 114Q284 138 301 162Q318 187 318 204Q318 215 312 222Q307 230 293 230Q274 230 247 218Q220 206 190 187Q161 168 135 146Q109 123 93 102Q77 81 77 66Z" fill="#000" transform="translate(1312.94,1012.56) scale(0.04512,-0.03704)"/><line x1="1316.50" y1="1008.60" x2="1316.50" y2="1042.60" stroke="#000" stroke-width="1.1" stroke-linecap="butt"/><circle cx="1336" cy="1014.3" r="1.9"/><path d="M50 615H81V225Q118 262 165 262Q197 262 223 240Q249 219 249 178Q249 146 230 119Q211 92 179 65L110 6Q91 -10 76 -26Q61 -41 50 -55ZM81 12Q107 40 125 64Q143 87 153 105Q164 124 170 140Q175 156 175 170Q175 198 162 210Q149 223 134 223Q118 223 102 212Q87 200 81 180Z" fill="#000" transform="translate(1366.09,999.20) scale(0.03819,-0.03642)"/><path d="M159 -1Q111 -1 80 22Q50 44 50 90Q50 141 78 182Q107 222 153 246Q199 269 251 269Q295 269 321 246Q347 222 347 179Q347 130 321 89Q295 48 252 24Q210 -1 159 -1ZM77 66Q77 56 84 48Q92 40 105 40Q140 40 192 69Q227 89 256 114Q284 138 301 162Q318 187 318 204Q318 215 312 222Q307 230 293 230Q274 230 247 218Q220 206 190 187Q161 168 135 146Q109 123 93 102Q77 81 77 66Z" fill="#000" transform="translate(1378.14,999.26) scale(0.04512,-0.03704)"/><line x1="1381.00" y1="995.30" x2="1381.00" y2="1029.10" stroke="#000" stroke-width="1.1" stroke-linecap="butt"/><circle cx="1400.6" cy="1001" r="1.9"/><line x1="1446.60" y1="940.80" x2="1446.60" y2="995.00" stroke="#000" stroke-width="2.6" stroke-linecap="butt"/><path d="M159 -1Q111 -1 80 22Q50 44 50 90Q50 141 78 182Q107 222 153 246Q199 269 251 269Q295 269 321 246Q347 222 347 179Q347 130 321 89Q295 48 252 24Q210 -1 159 -1ZM77 66Q77 56 84 48Q92 40 105 40Q140 40 192 69Q227 89 256 114Q284 138 301 162Q318 187 318 204Q318 215 312 222Q307 230 293 230Q274 230 247 218Q220 206 190 187Q161 168 135 146Q109 123 93 102Q77 81 77 66Z" fill="#000" transform="translate(1465.04,966.06) scale(0.04512,-0.03704)"/><line x1="1468.20" y1="962.10" x2="1468.20" y2="995.40" stroke="#000" stroke-width="1.1" stroke-linecap="butt"/><circle cx="1488.1" cy="961.1" r="1.9"/><line x1="1510.30" y1="927.90" x2="1531.80" y2="927.90" stroke="#000" stroke-width="1.6" stroke-linecap="butt"/><rect x="1513.70" y="927.90" width="15.20" height="7.40" rx="0" fill="#000"/><path d="M226 316V-221H195V-9L50 -46V486H83V279ZM197 84V212L81 183V56Z" fill="#000" transform="translate(1520.30,999.67) scale(0.03807,-0.03678)"/><path d="M159 -1Q111 -1 80 22Q50 44 50 90Q50 141 78 182Q107 222 153 246Q199 269 251 269Q295 269 321 246Q347 222 347 179Q347 130 321 89Q295 48 252 24Q210 -1 159 -1ZM77 66Q77 56 84 48Q92 40 105 40Q140 40 192 69Q227 89 256 114Q284 138 301 162Q318 187 318 204Q318 215 312 222Q307 230 293 230Q274 230 247 218Q220 206 190 187Q161 168 135 146Q109 123 93 102Q77 81 77 66Z" fill="#000" transform="translate(1530.04,999.26) scale(0.04512,-0.03704)"/><line x1="1533.00" y1="995.30" x2="1533.00" y2="1029.00" stroke="#000" stroke-width="1.1" stroke-linecap="butt"/><circle cx="1552.9" cy="1001" r="1.9"/><path d="M1323.2 1025.7 C1350 1046 1470 1044 1526.2 1013.8 C1470 1046 1350 1048.4 1323.2 1025.7Z" stroke="#000" stroke-width="0.7"/><line x1="1598.50" y1="940.80" x2="1598.50" y2="995.00" stroke="#000" stroke-width="2.6" stroke-linecap="butt"/><path d="M159 -1Q111 -1 80 22Q50 44 50 90Q50 141 78 182Q107 222 153 246Q199 269 251 269Q295 269 321 246Q347 222 347 179Q347 130 321 89Q295 48 252 24Q210 -1 159 -1ZM77 66Q77 56 84 48Q92 40 105 40Q140 40 192 69Q227 89 256 114Q284 138 301 162Q318 187 318 204Q318 215 312 222Q307 230 293 230Q274 230 247 218Q220 206 190 187Q161 168 135 146Q109 123 93 102Q77 81 77 66Z" fill="#000" transform="translate(1617.17,948.25) scale(0.05859,-0.05037)"/><line x1="1620.60" y1="943.00" x2="1620.60" y2="987.20" stroke="#000" stroke-width="1.4" stroke-linecap="butt"/><circle cx="1646.5" cy="934.9" r="2.2"/><path d="M50 615H81V225Q118 262 165 262Q197 262 223 240Q249 219 249 178Q249 146 230 119Q211 92 179 65L110 6Q91 -10 76 -26Q61 -41 50 -55ZM81 12Q107 40 125 64Q143 87 153 105Q164 124 170 140Q175 156 175 170Q175 198 162 210Q149 223 134 223Q118 223 102 212Q87 200 81 180Z" fill="#000" transform="translate(1693.99,934.66) scale(0.05628,-0.04791)"/><line x1="1710.00" y1="928.10" x2="1735.00" y2="928.10" stroke="#000" stroke-width="1.6" stroke-linecap="butt"/><path d="M159 -1Q111 -1 80 22Q50 44 50 90Q50 141 78 182Q107 222 153 246Q199 269 251 269Q295 269 321 246Q347 222 347 179Q347 130 321 89Q295 48 252 24Q210 -1 159 -1ZM77 66Q77 56 84 48Q92 40 105 40Q140 40 192 69Q227 89 256 114Q284 138 301 162Q318 187 318 204Q318 215 312 222Q307 230 293 230Q274 230 247 218Q220 206 190 187Q161 168 135 146Q109 123 93 102Q77 81 77 66Z" fill="#000" transform="translate(1709.57,934.85) scale(0.05859,-0.05037)"/><line x1="1713.00" y1="929.60" x2="1713.00" y2="974.20" stroke="#000" stroke-width="1.4" stroke-linecap="butt"/><circle cx="1738.8" cy="921.3" r="2.2"/><line x1="1806.20" y1="940.80" x2="1806.20" y2="995.00" stroke="#000" stroke-width="2.6" stroke-linecap="butt"/><line x1="1822.00" y1="901.60" x2="1850.00" y2="901.60" stroke="#000" stroke-width="1.6" stroke-linecap="butt"/><line x1="1822.00" y1="914.70" x2="1850.00" y2="914.70" stroke="#000" stroke-width="1.6" stroke-linecap="butt"/><line x1="1822.00" y1="927.70" x2="1850.00" y2="927.70" stroke="#000" stroke-width="1.6" stroke-linecap="butt"/><path d="M159 -1Q111 -1 80 22Q50 44 50 90Q50 141 78 182Q107 222 153 246Q199 269 251 269Q295 269 321 246Q347 222 347 179Q347 130 321 89Q295 48 252 24Q210 -1 159 -1ZM77 66Q77 56 84 48Q92 40 105 40Q140 40 192 69Q227 89 256 114Q284 138 301 162Q318 187 318 204Q318 215 312 222Q307 230 293 230Q274 230 247 218Q220 206 190 187Q161 168 135 146Q109 123 93 102Q77 81 77 66Z" fill="#000" transform="translate(1824.67,901.55) scale(0.05859,-0.05037)"/><line x1="1828.00" y1="896.30" x2="1828.00" y2="967.00" stroke="#000" stroke-width="1.4" stroke-linecap="butt"/><circle cx="1853.9" cy="895.2" r="2.2"/><path d="M226 316V-221H195V-9L50 -46V486H83V279ZM197 84V212L81 183V56Z" fill="#000" transform="translate(1904.39,934.40) scale(0.05227,-0.05021)"/><line x1="1917.70" y1="928.10" x2="1942.50" y2="928.10" stroke="#000" stroke-width="1.6" stroke-linecap="butt"/><path d="M159 -1Q111 -1 80 22Q50 44 50 90Q50 141 78 182Q107 222 153 246Q199 269 251 269Q295 269 321 246Q347 222 347 179Q347 130 321 89Q295 48 252 24Q210 -1 159 -1ZM77 66Q77 56 84 48Q92 40 105 40Q140 40 192 69Q227 89 256 114Q284 138 301 162Q318 187 318 204Q318 215 312 222Q307 230 293 230Q274 230 247 218Q220 206 190 187Q161 168 135 146Q109 123 93 102Q77 81 77 66Z" fill="#000" transform="translate(1917.67,934.85) scale(0.05859,-0.05037)"/><line x1="1920.60" y1="929.60" x2="1920.60" y2="974.20" stroke="#000" stroke-width="1.4" stroke-linecap="butt"/><circle cx="1946.7" cy="921.3" r="2.2"/><path d="M1628.4 923.9 C1700 880 1880 855 1928.3 903.7 C1880 858.5 1700 884 1628.4 923.9Z" stroke="#000" stroke-width="0.7"/><line x1="1712.10" y1="1027.30" x2="1824.80" y2="1019.40" stroke="#000" stroke-width="1.6" stroke-linecap="round"/><line x1="1712.10" y1="1027.30" x2="1824.80" y2="1035.40" stroke="#000" stroke-width="1.6" stroke-linecap="round"/><line x1="1829.10" y1="1019.40" x2="1919.30" y2="1027.30" stroke="#000" stroke-width="1.6" stroke-linecap="round"/><line x1="1829.10" y1="1035.40" x2="1919.30" y2="1027.30" stroke="#000" stroke-width="1.6" stroke-linecap="round"/></svg>
<span class="t " style="left:1316.22px;top:1048.04px;font-size:26.41px;color:#000;transform:scaleX(0.9258);font-family:'Liberation Serif','DejaVu Serif',serif;">B</span>
<span class="t " style="left:1330.09px;top:1046.05px;font-size:29.00px;color:#000;transform:scaleX(0.9773);font-family:'Liberation Serif','DejaVu Serif',serif;">♭</span>
<span class="t " style="left:1348.16px;top:1048.04px;font-size:26.41px;color:#000;transform:scaleX(1.0178);font-family:'Liberation Serif','DejaVu Serif',serif;">Cl.</span>
</div>
</body></html>
